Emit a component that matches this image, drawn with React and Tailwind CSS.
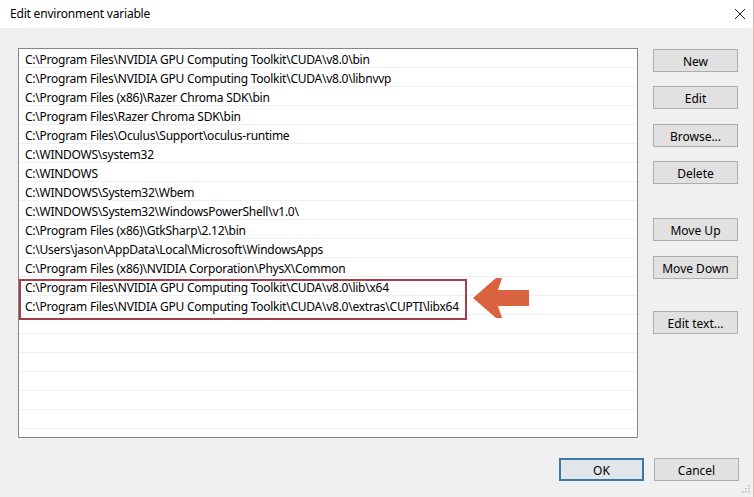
import React from "react";

const rows = [
  "C:\\Program Files\\NVIDIA GPU Computing Toolkit\\CUDA\\v8.0\\bin",
  "C:\\Program Files\\NVIDIA GPU Computing Toolkit\\CUDA\\v8.0\\libnvvp",
  "C:\\Program Files (x86)\\Razer Chroma SDK\\bin",
  "C:\\Program Files\\Razer Chroma SDK\\bin",
  "C:\\Program Files\\Oculus\\Support\\oculus-runtime",
  "C:\\WINDOWS\\system32",
  "C:\\WINDOWS",
  "C:\\WINDOWS\\System32\\Wbem",
  "C:\\WINDOWS\\System32\\WindowsPowerShell\\v1.0\\",
  "C:\\Program Files (x86)\\GtkSharp\\2.12\\bin",
  "C:\\Users\\jason\\AppData\\Local\\Microsoft\\WindowsApps",
  "C:\\Program Files (x86)\\NVIDIA Corporation\\PhysX\\Common",
  "C:\\Program Files\\NVIDIA GPU Computing Toolkit\\CUDA\\v8.0\\lib\\x64",
  "C:\\Program Files\\NVIDIA GPU Computing Toolkit\\CUDA\\v8.0\\extras\\CUPTI\\libx64",
  "", "", "", "", "", "", "",
];

function Btn({ children, className = "" }) {
  return (
    <div
      className={
        "w-[85px] h-[23px] flex items-center justify-center pt-[2px] bg-[#e1e1e1] border border-[#adadad] text-[12px] text-black " +
        className
      }
    >
      {children}
    </div>
  );
}

export default function App() {
  return (
    <div
      className="relative w-[754px] h-[497px] bg-[#f0f0f0] overflow-hidden flex flex-col"
      style={{ fontFamily: '"Noto Sans", "Open Sans", sans-serif' }}
    >
      {/* Title bar */}
      <div className="h-[28px] bg-white flex items-center justify-between pl-[10px] pr-[6px]">
        <span className="text-[12px] text-black tracking-[-0.2px]">Edit environment variable</span>
        <svg width="14" height="14" viewBox="0 0 14 14" className="mr-[1px]">
          <path d="M2 2 L12 12 M12 2 L2 12" stroke="#222" strokeWidth="1" />
        </svg>
      </div>

      {/* Body */}
      <div className="flex pl-[18px] pt-[20px]">
        <div className="w-[620px] h-[390px] border border-[#828790] bg-white overflow-hidden">
          {rows.map((r, i) => (
            <div
              key={i}
              className="h-[19px] border-b border-[#f0f0f0] pl-[6px] pt-[3px] flex items-center text-[12px] tracking-[-0.25px] text-black whitespace-nowrap leading-none"
            >
              {r}
            </div>
          ))}
        </div>
        <div className="ml-[15px] flex flex-col pt-[1px]">
          <Btn>New</Btn>
          <Btn className="mt-[14px]">Edit</Btn>
          <Btn className="mt-[15px]">Browse...</Btn>
          <Btn className="mt-[14px]">Delete</Btn>
          <Btn className="mt-[34px]">Move Up</Btn>
          <Btn className="mt-[15px]">Move Down</Btn>
          <Btn className="mt-[32px]">Edit text...</Btn>
        </div>
      </div>

      {/* Footer */}
      <div className="flex justify-end pr-[15px] mt-[20px] gap-[10px]">
        <div className="w-[85px] h-[23px] flex items-center justify-center pt-[2px] bg-[#e1e6eb] border-2 border-[#3b78a8] text-[12px] text-black">
          OK
        </div>
        <Btn>Cancel</Btn>
      </div>

      {/* Highlight box */}
      <div className="absolute left-[19px] top-[279px] w-[448px] h-[41px] border-2 border-[#a63e47]" />

      {/* Arrow */}
      <svg className="absolute left-[472px] top-[277px]" width="58" height="43" viewBox="0 0 58 43">
        <polygon points="1,21 24,1 30,1 26,13 57,13 57,29 26,29 30,41 24,41" fill="#d9623f" />
      </svg>

      {/* Window right border */}
      <div className="absolute right-0 top-0 w-[1px] h-full bg-[#e3b4b4]" />

      {/* Resize grip */}
      <svg className="absolute right-[3px] bottom-[3px]" width="10" height="10" viewBox="0 0 10 10">
        <rect x="7" y="1" width="1.5" height="1.5" fill="#bbb" />
        <rect x="4" y="4" width="1.5" height="1.5" fill="#bbb" />
        <rect x="7" y="4" width="1.5" height="1.5" fill="#bbb" />
        <rect x="1" y="7" width="1.5" height="1.5" fill="#bbb" />
        <rect x="4" y="7" width="1.5" height="1.5" fill="#bbb" />
        <rect x="7" y="7" width="1.5" height="1.5" fill="#bbb" />
      </svg>
    </div>
  );
}
